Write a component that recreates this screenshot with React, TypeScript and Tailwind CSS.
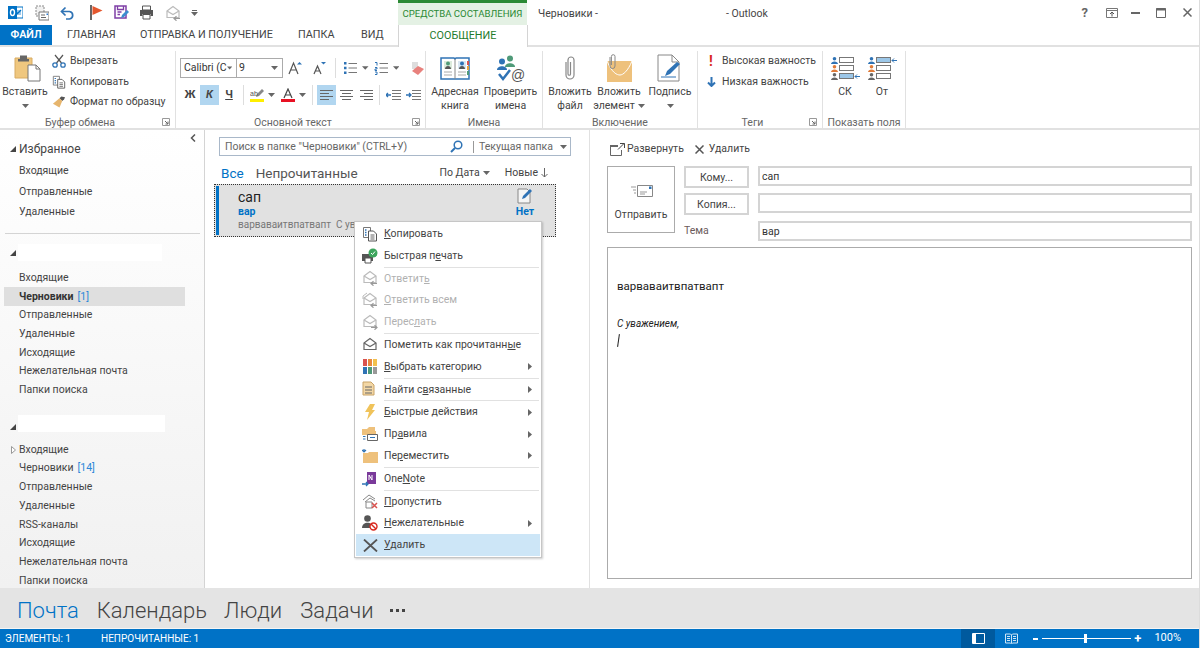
import type { ReactNode } from "react";

const Caret = ({ className = "" }: { className?: string }) => (
  <svg width="7" height="4" viewBox="0 0 7 4" className={className}>
    <path d="M0 0h7L3.500 4z" fill="#666" />
  </svg>
);

const Launcher = () => (
  <svg width="8" height="8" viewBox="0 0 8 8" className="absolute right-[5px] top-[67px]">
    <path d="M.5 7.500V.5h7v7z" fill="none" stroke="#999" />
    <path d="M3 3l3 3M6 3.500V6H3.500" fill="none" stroke="#666" />
  </svg>
);

const Corner = ({ size = 8, className = "" }: { size?: number; className?: string }) => (
  <svg width={size} height={size} viewBox="0 0 8 8" className={className}>
    <path d="M8 0v8H0z" fill="#444" />
  </svg>
);

const Group = ({ width, label, launcher, children }: { width: string; label: string; launcher?: boolean; children: ReactNode }) => (
  <div className={`relative flex shrink-0 flex-col border-r border-[#e1e1e1] ${width}`}>
    <div className="h-[65px] shrink-0">{children}</div>
    <div className={`text-center text-[10.500px] leading-[14px] text-[#666] ${launcher ? "pr-[15px]" : ""}`}>{label}</div>
    {launcher && <Launcher />}
  </div>
);

const BigButton = ({ icon, lines, caret, width }: { icon: ReactNode; lines: string[]; caret?: boolean; width: string }) => (
  <div className={`flex shrink-0 flex-col items-center ${width}`}>
    <div className="flex h-[34px] items-center justify-center">{icon}</div>
    {lines.map((line, i) => (
      <div key={line} className="flex h-[14px] items-center gap-[3px] whitespace-nowrap text-[10.500px] text-[#444]">
        {line}
        {caret && i === lines.length - 1 && lines.length > 1 && <Caret />}
      </div>
    ))}
    {caret && lines.length === 1 && <Caret className="mt-[5px]" />}
  </div>
);

const OutlookLogo = () => (
  <svg width="15" height="15" viewBox="0 0 15 15">
    <rect x="5" y="2" width="10" height="11" fill="#fff" stroke="#0072c6" />
    <path d="M7 5h6v5H7z" fill="#9cc7e8" />
    <path d="M8 7l1.500 1.500L13 5" fill="none" stroke="#0072c6" strokeWidth="1.300" />
    <rect y="1" width="9" height="13" fill="#0072c6" />
    <ellipse cx="4.500" cy="7.500" rx="2" ry="3" fill="none" stroke="#fff" strokeWidth="1.400" />
  </svg>
);

const ForwardMail = () => (
  <svg width="15" height="16" viewBox="0 0 15 16">
    <path d="M2 1h8v10H2z" fill="#f1f1f1" stroke="#8a8a8a" strokeDasharray="2 1" />
    <path d="M5 7h10v8H5z" fill="#fff" stroke="#777" />
    <path d="M7 10h4M7 12.500h5" stroke="#666" />
    <path d="M12.500 8.500h1.500v1.500h-1.500z" fill="#2b7cd3" />
  </svg>
);

const Undo = () => (
  <svg width="15" height="14" viewBox="0 0 15 14">
    <path d="M2 5.500h7.500a3.800 3.800 0 0 1 0 7.500H6" fill="none" stroke="#2f73b5" strokeWidth="1.700" />
    <path d="M5.500 1.500L1.500 5.500l4 4" fill="none" stroke="#2f73b5" strokeWidth="1.700" />
  </svg>
);

const Flag = () => (
  <svg width="13" height="15" viewBox="0 0 13 15">
    <path d="M1 0v15" stroke="#666" strokeWidth="2" />
    <path d="M2.500 1l10 4.500-10 4.500z" fill="#e4572e" />
  </svg>
);

const SaveEdit = () => (
  <svg width="15" height="15" viewBox="0 0 15 15">
    <path d="M1 1h11v12H1z" fill="#fff" stroke="#7f3fa6" strokeWidth="1.500" />
    <path d="M3.500 1v3.500h6V1M3.500 7h4M3.500 9.500h2.500" stroke="#7f3fa6" strokeWidth="1.300" fill="none" />
    <path d="M7 13l1-3 5-5 2 2-5 5z" fill="#3b8ed0" />
  </svg>
);

const Printer = () => (
  <svg width="15" height="15" viewBox="0 0 15 15">
    <path d="M3.500 1h8v4h-8z" fill="#fff" stroke="#555" />
    <path d="M1 5h13v6h-2.500V9h-8v2H1z" fill="#555" />
    <path d="M4 9.500h7v4.500H4z" fill="#fff" stroke="#555" />
  </svg>
);

const OpenMail = ({ color = "#bbb", arrow, all }: { color?: string; arrow?: "left" | "right"; all?: boolean }) => (
  <svg width="16" height="16" viewBox="0 0 16 16">
    {all && <path d="M1 7V4l4-3" fill="none" stroke={color} />}
    <path d="M2 6l6-4.500L14 6v6.500H2z" fill="#fff" stroke={color} strokeWidth="1.200" />
    <path d="M2 6l6 3.500L14 6" fill="none" stroke={color} strokeWidth="1.200" />
    {arrow === "left" && <path d="M15 13.500H9m2.500-2.200L9 13.500l2.500 2.200" fill="none" stroke="#999" strokeWidth="1.200" />}
    {arrow === "right" && <path d="M9 13.500h6m-2.500-2.200l2.500 2.200-2.500 2.200" fill="none" stroke="#999" strokeWidth="1.200" />}
  </svg>
);

const CopyIcon = () => (
  <svg width="16" height="16" viewBox="0 0 16 16">
    <path d="M1.500 1.500h7v10h-7z" fill="#fff" stroke="#777" />
    <path d="M3 4h1.500M3 6.500h1.500M3 9h1.500" stroke="#2f73b5" strokeWidth="1.300" />
    <path d="M6.500 5h5l3 3v7h-8z" fill="#fff" stroke="#555" />
    <path d="M8.500 9h4M8.500 11h4M8.500 13h4" stroke="#666" />
  </svg>
);

const Scissors = () => (
  <svg width="14" height="14" viewBox="0 0 14 14">
    <path d="M3 1l6.500 8M11 1L4.500 9" stroke="#555" strokeWidth="1.200" />
    <circle cx="3" cy="11" r="2.200" fill="none" stroke="#2f73b5" strokeWidth="1.300" />
    <circle cx="11" cy="11" r="2.200" fill="none" stroke="#2f73b5" strokeWidth="1.300" />
  </svg>
);

const Brush = () => (
  <svg width="15" height="14" viewBox="0 0 15 14">
    <path d="M8 3l2-2 4 1-1 2-2 2z" fill="#555" />
    <path d="M8 3l3 3-3 7-7-4z" fill="#e6b56d" />
  </svg>
);

const PasteIcon = () => (
  <svg width="27" height="28" viewBox="0 0 27 28" className="ml-[4px]">
    <path d="M1 4h17v20H1z" fill="#efc77f" stroke="#d8ab62" />
    <path d="M6 1.500h7V5h2v2.500H4V5h2z" fill="#666" />
    <path d="M14 11h8l4 4v12H14z" fill="#fff" stroke="#777" />
    <path d="M22 11v4h4" fill="none" stroke="#777" />
  </svg>
);

const FontA = ({ up }: { up?: boolean }) => (
  <svg width="14" height="14" viewBox="0 0 14 14">
    <path d={up ? "M1 13L5.500 2 10 13M3 9h5" : "M2 13L5.500 5 9 13M3.500 10h4"} fill="none" stroke="#555" strokeWidth="1.200" />
    <path d={up ? "M9 3.500h5L11.500 1z" : "M9 1h5l-2.500 2.500z"} fill="#2f73b5" />
  </svg>
);

const ListIcon = ({ numbered }: { numbered?: boolean }) => (
  <svg width="14" height="14" viewBox="0 0 14 14">
    {numbered ? (
      <path d="M1 1.500h2v3M1 6.500h2v1.500H1v1.500h2M1 11h2v2.500H1" fill="none" stroke="#2f73b5" />
    ) : (
      <path d="M1 1h2.500v2.500H1zM1 5.750h2.500v2.500H1zM1 10.500h2.500V13H1z" fill="#2f73b5" />
    )}
    <path d="M5.500 2.500H14M5.500 7H14M5.500 11.500H14" stroke="#777" />
  </svg>
);

const Align = ({ mode }: { mode: "left" | "center" | "right" }) => {
  const d = {
    left: "M0 1.500h13M0 4.500h9M0 7.500h13M0 10.500h9",
    center: "M0 1.500h13M2 4.500h9M0 7.500h13M2 10.500h9",
    right: "M0 1.500h13M4 4.500h9M0 7.500h13M4 10.500h9",
  }[mode];
  return (
    <svg width="13" height="12" viewBox="0 0 13 12">
      <path d={d} stroke="#666" />
    </svg>
  );
};

const Indent = ({ reverse }: { reverse?: boolean }) => (
  <svg width="15" height="12" viewBox="0 0 15 12">
    <path d="M6 1.500h9M6 4.500h9M6 7.500h9M6 10.500h9" stroke="#777" />
    <path d={reverse ? "M0 6h5M3 4l2 2-2 2" : "M5 6H0M2 4L0 6l2 2"} fill="none" stroke="#2f73b5" strokeWidth="1.300" />
  </svg>
);

const Eraser = () => (
  <svg width="14" height="15" viewBox="0 0 14 15">
    <path d="M1 1h6v7H1z" fill="#ddd" />
    <path d="M1 10l6-5 6 3-6 6z" fill="#e8817d" />
  </svg>
);

const AddressBook = () => (
  <svg width="30" height="25" viewBox="0 0 30 25">
    <path d="M1 2h13l1 1 1-1h13v21H1z" fill="#fff" stroke="#2f73b5" strokeWidth="1.500" />
    <path d="M15 3v20" stroke="#888" />
    <rect x="4" y="5" width="8" height="8" fill="#dcebdc" />
    <rect x="18" y="5" width="8" height="8" fill="#d8e6f3" />
    <circle cx="8" cy="7.500" r="2" fill="#4f9a78" />
    <circle cx="22" cy="7.500" r="2" fill="#2f73b5" />
    <path d="M5 13c0-4 6-4 6 0zM19 13c0-4 6-4 6 0z" fill="#555" />
    <path d="M4 16h8M4 19h8M18 16h8M18 19h8" stroke="#aaa" />
    <path d="M28 5v4" stroke="#d9534f" strokeWidth="2" />
    <path d="M28 10v4" stroke="#e8a33d" strokeWidth="2" />
    <path d="M28 15v4" stroke="#4f9a78" strokeWidth="2" />
  </svg>
);

const CheckNames = () => (
  <svg width="28" height="27" viewBox="0 0 28 27">
    <circle cx="13" cy="3.500" r="3" fill="#4f9a78" />
    <path d="M8 12c0-5 10-5 10 0z" fill="#4f9a78" />
    <circle cx="5" cy="6.500" r="3" fill="#2f73b5" />
    <path d="M0 15c0-5 10-5 10 0z" fill="#2f73b5" />
    <path d="M2 19l4 5 7-9" fill="none" stroke="#2f73b5" strokeWidth="2.500" />
    <text x="14" y="25" fontSize="14" fill="#555" fontFamily="Liberation Sans">@</text>
  </svg>
);

const Clip = () => (
  <svg width="14" height="26" viewBox="0 0 14 26">
    <path d="M3 7v13a4 4 0 0 0 8 0V5a3 3 0 0 0-6 0v14a1.200 1.200 0 0 0 2.500 0V7" fill="none" stroke="#888" strokeWidth="1.200" />
  </svg>
);

const AttachItem = () => (
  <svg width="26" height="29" viewBox="0 0 26 29">
    <path d="M1 7h25v21H1z" fill="#eec17c" />
    <path d="M1 7c5 12 10 14 13 14s8-4 12-14" fill="none" stroke="#fff" />
    <path d="M4 3v9a2.500 2.500 0 0 0 5 0V2.500a1.800 1.800 0 0 0-3.600 0V11" fill="none" stroke="#888" />
  </svg>
);

const Signature = () => (
  <svg width="26" height="28" viewBox="0 0 26 28">
    <path d="M1 1h14l7 7v19H1z" fill="#fff" stroke="#888" />
    <path d="M15 1v7h7" fill="none" stroke="#888" />
    <path d="M4 23h15" stroke="#2f73b5" />
    <path d="M8 22l2-5L20 8l3 2-10 10z" fill="#2f73b5" />
  </svg>
);

const Contact = ({ color }: { color: string }) => (
  <svg width="7" height="7" viewBox="0 0 7 7">
    <circle cx="3.500" cy="1.800" r="1.800" fill={color} />
    <path d="M0 7c0-3.500 7-3.500 7 0z" fill={color} />
  </svg>
);

const FieldRow = ({ color, on, arrow }: { color: string; on?: boolean; arrow?: boolean }) => (
  <div className="flex h-[7px] items-center gap-[1px]">
    <Contact color={color} />
    <div className={`h-[6px] w-[15px] border border-[#777] ${on ? "bg-[#9cc7e8]" : "bg-white"}`} />
    {arrow ? (
      <svg width="6" height="5" viewBox="0 0 6 5" className="ml-[-1px]">
        <path d="M6 2.500H1M3 .5l-2 2 2 2" fill="none" stroke="#2f73b5" />
      </svg>
    ) : (
      <span className="w-[5px]" />
    )}
  </div>
);

const FieldsIcon = ({ active }: { active: number }) => (
  <div className="flex flex-col gap-[1px]">
    {["#2f73b5", "#e07b39", "#666"].map((color, i) => (
      <FieldRow key={color} color={color} on={i === active} arrow={i === active} />
    ))}
  </div>
);

const SmallRibbonRow = ({ icon, text }: { icon: ReactNode; text: string }) => (
  <div className="flex h-[20.500px] items-center gap-[4px] whitespace-nowrap text-[10.500px] text-[#444]">
    <span className="flex w-[14px] justify-center">{icon}</span>
    {text}
  </div>
);

const VLine = ({ className = "" }: { className?: string }) => <span className={`h-[20px] w-px bg-[#ddd] ${className}`} />;

const Ribbon = () => (
  <div className="flex h-[83px] shrink-0 border-b-2 border-[#e1e1e1] pt-[4px]">
    <Group width="w-[176px]" label="Буфер обмена" launcher>
      <div className="flex">
        <div className="w-[50px]">
          <BigButton width="w-[50px]" icon={<PasteIcon />} lines={["Вставить"]} caret />
        </div>
        <div className="ml-[2px]">
          <SmallRibbonRow icon={<Scissors />} text="Вырезать" />
          <SmallRibbonRow icon={<CopyIcon />} text="Копировать" />
          <SmallRibbonRow icon={<Brush />} text="Формат по образцу" />
        </div>
      </div>
    </Group>
    <Group width="w-[250px]" label="Основной текст" launcher>
      <div className="flex items-center pl-[4px] pt-[7px]">
        <div className="flex h-[20px] w-[57px] items-center justify-between whitespace-nowrap border border-[#ababab] pl-[3px] pr-[4px] text-[10.500px] text-[#333]">
          Calibri (С <Caret />
        </div>
        <div className="ml-[-1px] flex h-[20px] w-[50px] items-center justify-between border border-[#ababab] pl-[2px] pr-[4px] text-[10.500px] text-[#333]">
          9 <Caret />
        </div>
        <span className="ml-[5px] flex"><FontA up /></span>
        <span className="ml-[10px] flex"><FontA /></span>
        <VLine className="ml-[9px]" />
        <span className="ml-[7px] flex"><ListIcon /></span>
        <Caret className="ml-[5px]" />
        <span className="ml-[5px] flex"><ListIcon numbered /></span>
        <Caret className="ml-[5px]" />
        <span className="ml-[12px] flex"><Eraser /></span>
      </div>
      <div className="mt-[7px] flex h-[20px] items-center pl-[4px]">
        <span className="w-[20px] text-center text-[11px] font-bold text-[#444]">Ж</span>
        <span className="w-[19px] bg-[#b1d6f0] text-center text-[11px] font-bold italic leading-[20px] text-[#444]">К</span>
        <span className="w-[20px] text-center text-[11px] font-bold text-[#444] underline">Ч</span>
        <VLine className="ml-[4px]" />
        <svg width="14" height="14" viewBox="0 0 14 14" className="ml-[6px]">
          <path d="M0 11h14v3H0z" fill="#ffef00" />
          <path d="M6 9l1-3 5-5 2 2-5 5z" fill="#888" />
          <text x="0" y="8" fontSize="7" fill="#555" fontFamily="Liberation Sans">ab</text>
        </svg>
        <Caret className="ml-[4px]" />
        <svg width="14" height="14" viewBox="0 0 14 14" className="ml-[6px]">
          <path d="M0 11h14v3H0z" fill="#e81123" />
          <path d="M3 10L7 1l4 9M4.500 7h5" fill="none" stroke="#444" strokeWidth="1.200" />
        </svg>
        <Caret className="ml-[4px]" />
        <VLine className="ml-[6px]" />
        <span className="ml-[4px] flex h-[20px] w-[19px] items-center justify-center bg-[#b1d6f0]"><Align mode="left" /></span>
        <span className="flex h-[20px] w-[20px] items-center justify-center"><Align mode="center" /></span>
        <span className="flex h-[20px] w-[20px] items-center justify-center"><Align mode="right" /></span>
        <VLine className="ml-[3px]" />
        <span className="ml-[6px] flex"><Indent /></span>
        <span className="ml-[5px] flex"><Indent reverse /></span>
      </div>
    </Group>
    <Group width="w-[117px]" label="Имена">
      <div className="flex pl-[1px]">
        <BigButton width="w-[56px]" icon={<AddressBook />} lines={["Адресная", "книга"]} />
        <BigButton width="w-[55px]" icon={<CheckNames />} lines={["Проверить", "имена"]} />
      </div>
    </Group>
    <Group width="w-[155px]" label="Включение">
      <div className="flex pl-[3px]">
        <BigButton width="w-[48px]" icon={<Clip />} lines={["Вложить", "файл"]} />
        <BigButton width="w-[50px]" icon={<AttachItem />} lines={["Вложить", "элемент"]} caret />
        <BigButton width="w-[52px]" icon={<Signature />} lines={["Подпись"]} caret />
      </div>
    </Group>
    <Group width="w-[125px]" label="Теги" launcher>
      <div className="pl-[6px]">
        <SmallRibbonRow icon={<span className="text-[14px] font-bold leading-none text-[#d9281e]">!</span>} text="Высокая важность" />
        <SmallRibbonRow
          icon={
            <svg width="9" height="10" viewBox="0 0 9 10">
              <path d="M4.500 0v9M1 5.500L4.500 9 8 5.500" fill="none" stroke="#2f73b5" strokeWidth="2" />
            </svg>
          }
          text="Низкая важность"
        />
      </div>
    </Group>
    <Group width="w-[83px]" label="Показать поля">
      <div className="flex pl-[3px]">
        <BigButton width="w-[38px]" icon={<FieldsIcon active={2} />} lines={["СК"]} />
        <BigButton width="w-[36px]" icon={<FieldsIcon active={0} />} lines={["От"]} />
      </div>
    </Group>
  </div>
);

const TitleBar = () => (
  <div className="flex h-[25px] shrink-0">
    <div className="flex w-[398px] items-center pl-[8px]">
      <span className="flex"><OutlookLogo /></span>
      <span className="ml-[11px] flex"><ForwardMail /></span>
      <span className="ml-[11px] flex"><Undo /></span>
      <span className="ml-[15px] flex"><Flag /></span>
      <span className="ml-[11px] flex"><SaveEdit /></span>
      <span className="ml-[10px] flex"><Printer /></span>
      <span className="ml-[11px] flex"><OpenMail arrow="left" /></span>
      <span className="ml-[10px] flex flex-col items-center gap-[1px]">
        <span className="h-px w-[5px] bg-[#666]" />
        <Caret />
      </span>
    </div>
    <div className="flex w-[129px] items-center justify-center whitespace-nowrap border-t-[3px] border-[#2b8a35] bg-[#e4f1e4] text-[9.600px] text-[#2b8a35]">
      СРЕДСТВА СОСТАВЛЕНИЯ
    </div>
    <div className="flex flex-1 items-center whitespace-pre pl-[11px] pt-[2px] text-[10.500px] text-[#444]">
      <span className="w-[188px]">Черновики -</span>
      <span>- Outlook</span>
    </div>
    <div className="flex items-center pr-[7px]">
      <span className="mr-[18px] text-[13px] font-bold text-[#666]">?</span>
      <svg width="12" height="10" viewBox="0 0 12 10" className="mr-[13px]">
        <path d="M.5.5h11v9H.5zM.5 2.500h11" fill="none" stroke="#777" />
        <path d="M6 8.500V4M4 6l2-2 2 2" fill="none" stroke="#555" />
      </svg>
      <span className="mr-[16px] h-[2px] w-[9px] bg-[#666]" />
      <svg width="10" height="10" viewBox="0 0 10 10" className="mr-[17px]">
        <path d="M.5.5h9v9h-9z" fill="none" stroke="#666" />
        <path d="M0 1.500h10" stroke="#666" strokeWidth="2" />
      </svg>
      <svg width="9" height="9" viewBox="0 0 9 9">
        <path d="M.5.5l8 8M8.500.5l-8 8" stroke="#666" strokeWidth="1.500" />
      </svg>
    </div>
  </div>
);

const TabBar = () => (
  <div className="flex h-[22px] shrink-0 items-stretch border-b-2 border-[#e1e1e1] text-[10.800px] text-[#444]">
    <div className="flex w-[52px] items-center justify-center bg-[#0072c6] pt-[1px] font-semibold text-white">ФАЙЛ</div>
    <div className="flex w-[346px] items-center pl-[15px] pt-[1px]">
      <span className="w-[73px]">ГЛАВНАЯ</span>
      <span className="w-[158px]">ОТПРАВКА И ПОЛУЧЕНИЕ</span>
      <span className="w-[63px]">ПАПКА</span>
      <span>ВИД</span>
    </div>
    <div className="mb-[-2px] flex w-[130px] items-center justify-center border-x border-[#d4d4d4] bg-white text-[#1e7b2c]">СООБЩЕНИЕ</div>
  </div>
);

const FolderRow = ({ name, count, active, bold, arrow, height = "h-[18.700px]" }: { name: string; count?: number; active?: boolean; bold?: boolean; arrow?: boolean; height?: string }) => (
  <div className={`relative ml-[4px] mr-[19px] flex items-center whitespace-nowrap pl-[15px] text-[10.500px] text-[#444] ${height} ${active ? "bg-[#dfdfdf]" : ""}`}>
    {arrow && (
      <svg width="5" height="8" viewBox="0 0 5 8" className="absolute left-[7px]">
        <path d="M.5.5l4 3.500-4 3.500z" fill="#fff" stroke="#999" />
      </svg>
    )}
    <span className={bold ? "font-bold text-[#333]" : ""}>{name}</span>
    {count !== undefined && <span className="ml-[4px] text-[#2b88d8]">[{count}]</span>}
  </div>
);

const Sidebar = () => (
  <div className="relative w-[205px] shrink-0 overflow-hidden border-r border-[#d4d4d4] bg-gradient-to-b from-white to-[#f1f1f1]">
    <svg width="6" height="8" viewBox="0 0 6 8" className="absolute right-[8px] top-[4px]">
      <path d="M5 .5L1.500 4 5 7.500" fill="none" stroke="#555" strokeWidth="1.500" />
    </svg>
    <div className="mt-[10px] flex h-[18px] items-center pl-[10px] text-[12px] text-[#444]">
      <Corner size={6} />
      <span className="ml-[3px]">Избранное</span>
    </div>
    <div className="mt-[3px]">
      <FolderRow name="Входящие" height="h-[20.500px]" />
      <FolderRow name="Отправленные" height="h-[20.500px]" />
      <FolderRow name="Удаленные" height="h-[20.500px]" />
    </div>
    <div className="ml-[5px] mr-[4px] mt-[10px] h-px bg-[#d4d4d4]" />
    <div className="mt-[10px] flex h-[18px] items-center pl-[10px]">
      <Corner size={6} />
      <span className="ml-[2px] h-[17px] w-[144px] bg-white" />
    </div>
    <div className="mt-[7px]">
      <FolderRow name="Входящие" />
      <FolderRow name="Черновики" count={1} active bold />
      <FolderRow name="Отправленные" />
      <FolderRow name="Удаленные" />
      <FolderRow name="Исходящие" />
      <FolderRow name="Нежелательная почта" />
      <FolderRow name="Папки поиска" />
    </div>
    <div className="mt-[16px] flex h-[18px] items-start pl-[10px]">
      <Corner size={6} className="mt-[9px]" />
      <span className="ml-[2px] h-[17px] w-[147px] bg-white" />
    </div>
    <div className="mt-[7px]">
      <FolderRow name="Входящие" arrow />
      <FolderRow name="Черновики" count={14} />
      <FolderRow name="Отправленные" />
      <FolderRow name="Удаленные" />
      <FolderRow name="RSS-каналы" />
      <FolderRow name="Исходящие" />
      <FolderRow name="Нежелательная почта" />
      <FolderRow name="Папки поиска" />
    </div>
  </div>
);

const MessageList = () => (
  <div className="flex w-[385px] shrink-0 flex-col border-r border-[#e1e1e1] pl-[14px] pt-[7px]">
    <div className="flex h-[19px] w-[352px] items-center border border-[#a9b8c9] pl-[5px] pr-[3px] text-[10.500px] text-[#666]">
      <span className="flex-1 whitespace-nowrap pt-px">Поиск в папке "Черновики" (CTRL+У)</span>
      <svg width="13" height="13" viewBox="0 0 13 13">
        <circle cx="8" cy="5" r="3.800" fill="none" stroke="#2f73b5" strokeWidth="1.500" />
        <path d="M5 8l-4 4" stroke="#2f73b5" strokeWidth="2" />
      </svg>
      <span className="ml-[10px] mr-[5px] h-[12px] w-px bg-[#999]" />
      <span className="whitespace-nowrap pt-px">Текущая папка</span>
      <Caret className="ml-[7px]" />
    </div>
    <div className="mt-[7px] flex h-[20px] w-[329px] items-center pl-[2px]">
      <span className="text-[13.500px] text-[#0072c6]">Все</span>
      <span className="ml-[12px] text-[13.500px] text-[#555]">Непрочитанные</span>
      <span className="ml-auto text-[10.500px] text-[#444]">По Дата</span>
      <Caret className="ml-[3px]" />
      <span className="ml-[15px] text-[10.500px] text-[#444]">Новые</span>
      <svg width="7" height="10" viewBox="0 0 7 10" className="ml-[3px]">
        <path d="M3.500 0v9M.5 6l3 3 3-3" fill="none" stroke="#666" />
      </svg>
    </div>
    <div className="ml-[-5px] mt-[1px] flex h-[53px] w-[342px] border border-dotted border-[#333] bg-[#e1e1e1] pl-px">
      <div className="my-px w-[3px] bg-[#0072c6]" />
      <div className="min-w-0 flex-1 pl-[19px]">
        <div className="pt-[4px] text-[14px] leading-[16px] text-[#222]">сап</div>
        <div className="text-[10.500px] font-bold leading-[13px] text-[#0072c6]">вар</div>
        <div className="whitespace-nowrap text-[10px] leading-[14px] text-[#777]">варваваитвпатвапт&nbsp;&nbsp;С уважением,</div>
      </div>
      <div className="flex w-[60px] shrink-0 flex-col items-center pt-[3px]">
        <svg width="16" height="16" viewBox="0 0 16 16">
          <path d="M1 1h9l3 3v11H1z" fill="#f5f5f5" stroke="#888" />
          <path d="M5 11l1-3 7-7 2 2-7 7z" fill="#2f73b5" />
        </svg>
        <div className="mt-px text-[10.500px] font-bold leading-[14px] text-[#0072c6]">Нет</div>
      </div>
    </div>
  </div>
);

const FieldButton = ({ text }: { text: string }) => (
  <div className="flex h-[22px] w-[65px] items-center justify-center border-2 border-[#d4d4d4] pt-[2px] text-[10.500px] text-[#444]">{text}</div>
);

const FieldInput = ({ value }: { value?: string }) => (
  <div className="flex h-[20px] flex-1 items-center border-2 border-[#d4d4d4] pl-[2px] pt-px text-[10.500px] text-[#333]">{value}</div>
);

const ReadingPane = () => (
  <div className="flex min-w-0 flex-1 flex-col pl-[17px] pr-[7px]">
    <div className="flex h-[36px] items-center pt-[2px] text-[10.500px] text-[#444]">
      <svg width="15" height="13" viewBox="0 0 15 13" className="ml-[3px] mr-[2px]">
        <path d="M8 2.500H.5v10h11V7" fill="none" stroke="#666" />
        <path d="M0 2h8v2H0z" fill="#666" />
        <path d="M8 6.500l6-6M10 .5h4.500V5" fill="none" stroke="#444" />
      </svg>
      Развернуть
      <svg width="9" height="9" viewBox="0 0 9 9" className="ml-[11px] mr-[5px]">
        <path d="M.5.5l8 8M8.500.5l-8 8" stroke="#555" strokeWidth="1.500" />
      </svg>
      Удалить
    </div>
    <div className="flex">
      <div className="flex h-[67px] w-[68px] shrink-0 flex-col items-center border border-[#ababab] pt-[18px] text-[10.500px] text-[#444]">
        <svg width="24" height="12" viewBox="0 0 24 12">
          <path d="M8.500.5h15v11h-15z" fill="#fff" stroke="#888" />
          <path d="M11 7h7M11 9h5M2 2h5M4 5h3M5 8h2" stroke="#999" />
          <path d="M20 1.500h2.500v2.500H20z" fill="#2f73b5" />
        </svg>
        <div className="mt-[10px]">Отправить</div>
      </div>
      <div className="ml-[9px] flex flex-1 flex-col">
        <div className="flex gap-[9px]">
          <FieldButton text="Кому..." />
          <FieldInput value="сап" />
        </div>
        <div className="mt-[5px] flex gap-[9px]">
          <FieldButton text="Копия..." />
          <FieldInput />
        </div>
        <div className="mt-[6px] flex gap-[9px]">
          <div className="w-[65px] text-[10.500px] leading-[20px] text-[#6b5a5a]">Тема</div>
          <FieldInput value="вар" />
        </div>
      </div>
    </div>
    <div className="mb-[9px] mt-[6px] flex-1 border border-[#ababab] pl-[9px] pt-[30px]">
      <div className="text-[11.500px] leading-[16px] text-[#222]">варваваитвпатвапт</div>
      <div className="mt-[24px] text-[10px] italic leading-[12px] text-[#222]">С уважением,</div>
      <div className="ml-px mt-[4px] h-[13px] w-px rotate-[8deg] bg-[#222]" />
    </div>
  </div>
);

type MenuItem = { icon?: ReactNode; parts: [string, string, string]; disabled?: boolean; sub?: boolean; active?: boolean } | "sep";

const Tile = ({ colors }: { colors: string[] }) => (
  <div className="grid grid-cols-3 gap-px">
    {colors.map((c, i) => (
      <span key={i} className="h-[7px] w-[4px]" style={{ backgroundColor: c }} />
    ))}
  </div>
);

const menu: MenuItem[] = [
  { icon: <CopyIcon />, parts: ["", "К", "опировать"] },
  {
    icon: (
      <svg width="16" height="16" viewBox="0 0 16 16">
        <path d="M0 6h11v7H0z" fill="#555" />
        <path d="M3 10h6v5H3z" fill="#fff" stroke="#555" />
        <circle cx="11" cy="5" r="4.500" fill="#3ca55c" />
        <path d="M9 5l1.500 1.500L13 3.500" fill="none" stroke="#fff" />
      </svg>
    ),
    parts: ["Быстрая п", "е", "чать"],
  },
  "sep",
  { icon: <OpenMail arrow="left" />, parts: ["Ответит", "ь", ""], disabled: true },
  { icon: <OpenMail arrow="left" all />, parts: ["", "О", "тветить всем"], disabled: true },
  { icon: <OpenMail arrow="right" />, parts: ["Перес", "л", "ать"], disabled: true },
  "sep",
  { icon: <OpenMail color="#666" />, parts: ["Пометить как прочитанн", "ы", "е"] },
  {
    icon: <Tile colors={["#d9534f", "#e8873d", "#f2c14e", "#2f73b5", "#4f9a78", "#999"]} />,
    parts: ["", "В", "ыбрать категорию"],
    sub: true,
  },
  "sep",
  {
    icon: (
      <svg width="16" height="16" viewBox="0 0 16 16">
        <path d="M1 1h8l3 3v10H1z" fill="#f3d7a5" stroke="#c9a366" />
        <path d="M3 6h7M3 9h7M3 12h7" stroke="#666" />
      </svg>
    ),
    parts: ["Найти с", "в", "язанные"],
    sub: true,
  },
  "sep",
  {
    icon: (
      <svg width="10" height="16" viewBox="0 0 10 16">
        <path d="M5 0h5L7 6h3L2 16l2-8H0z" fill="#f0c35a" />
      </svg>
    ),
    parts: ["", "Б", "ыстрые действия"],
    sub: true,
  },
  {
    icon: (
      <svg width="16" height="14" viewBox="0 0 16 14">
        <path d="M0 2h5l2-2h6v6H0z" fill="#eec17c" />
        <path d="M0 4h14v4H0z" fill="#eec17c" />
        <path d="M5.500 7.500h10v6h-10z" fill="#fff" stroke="#666" />
        <path d="M8 10.500h5M1 9.500h2.500M1 12h2.500" stroke="#2f73b5" />
      </svg>
    ),
    parts: ["Пр", "а", "вила"],
    sub: true,
  },
  {
    icon: (
      <svg width="16" height="14" viewBox="0 0 16 14">
        <path d="M1 4h5l1-1h9v11H1z" fill="#eec17c" />
        <path d="M0 1l2 2 2-2M2 0v3" fill="none" stroke="#2f73b5" strokeWidth="1.200" />
      </svg>
    ),
    parts: ["Пе", "р", "еместить"],
    sub: true,
  },
  "sep",
  {
    icon: (
      <svg width="16" height="16" viewBox="0 0 16 16">
        <path d="M5 1h9v12H5z" fill="#7a3a9a" />
        <path d="M7 9V4l3 5V4" fill="none" stroke="#fff" />
        <path d="M0 13h6m-2-2l2 2-2 2" fill="none" stroke="#2f73b5" strokeWidth="1.300" />
      </svg>
    ),
    parts: ["One", "N", "ote"],
  },
  "sep",
  {
    icon: (
      <svg width="16" height="16" viewBox="0 0 16 16">
        <path d="M1 7l6-5 6 4M3 9l5-4 5 3" fill="none" stroke="#888" />
        <path d="M4 9h6v6H4z" fill="#fff" stroke="#888" />
        <path d="M10 10l5 5M15 10l-5 5" stroke="#d9534f" strokeWidth="1.500" />
      </svg>
    ),
    parts: ["", "П", "ропустить"],
  },
  {
    icon: (
      <svg width="16" height="16" viewBox="0 0 16 16">
        <circle cx="5.500" cy="3.500" r="3.300" fill="#555" />
        <path d="M0 13c0-7 11-7 11 0z" fill="#555" />
        <circle cx="11.500" cy="11.500" r="3.500" fill="#fff" stroke="#d9281e" strokeWidth="1.400" />
        <path d="M9 9l5 5" stroke="#d9281e" strokeWidth="1.400" />
      </svg>
    ),
    parts: ["", "Н", "ежелательные"],
    sub: true,
  },
  {
    icon: (
      <svg width="15" height="13" viewBox="0 0 15 13">
        <path d="M1 .5l13 12M14 .5L1 12.500" stroke="#555" strokeWidth="1.800" />
      </svg>
    ),
    parts: ["", "У", "далить"],
    active: true,
  },
];

const ContextMenu = () => (
  <div className="absolute left-[354px] top-[221px] w-[188px] border border-[#c6c6c6] bg-white p-px shadow-[1px_1px_2px_rgba(0,0,0,0.2)]">
    {menu.map((item, i) =>
      item === "sep" ? (
        <div key={i} className="ml-[28px] mr-px h-px bg-[#e1e1e1]" />
      ) : (
        <div
          key={i}
          className={`flex h-[21.800px] items-center whitespace-nowrap pr-[8px] text-[10.500px] ${item.disabled ? "text-[#b1b1b1]" : "text-[#444]"} ${item.active ? "bg-[#cde6f7]" : ""}`}
        >
          <span className="flex w-[28px] shrink-0 justify-center">{item.icon}</span>
          <span>
            {item.parts[0]}
            <u>{item.parts[1]}</u>
            {item.parts[2]}
          </span>
          {item.sub && (
            <svg width="4" height="7" viewBox="0 0 4 7" className="ml-auto">
              <path d="M0 0l4 3.500L0 7z" fill="#666" />
            </svg>
          )}
        </div>
      ),
    )}
  </div>
);

const NavBar = () => (
  <div className="flex h-[41px] shrink-0 items-center border-b border-[#f5f5f5] bg-[#e4e4e4] pl-[17px] pt-[4px] text-[22px] font-light text-[#444]">
    <span className="text-[#0072c6]">Почта</span>
    <span className="ml-[18px]">Календарь</span>
    <span className="ml-[17px]">Люди</span>
    <span className="ml-[18px]">Задачи</span>
    <span className="ml-[16px] flex gap-[3px]">
      <i className="h-[3px] w-[3px] bg-[#444]" />
      <i className="h-[3px] w-[3px] bg-[#444]" />
      <i className="h-[3px] w-[3px] bg-[#444]" />
    </span>
  </div>
);

const StatusBar = () => (
  <div className="flex h-[19px] shrink-0 items-center bg-[#0072c6] text-[10px] text-white">
    <span className="ml-[5px] w-[96px]">ЭЛЕМЕНТЫ: 1</span>
    <span>НЕПРОЧИТАННЫЕ: 1</span>
    <div className="ml-auto flex h-full items-center">
      <span className="flex h-full w-[34px] items-center justify-center bg-[#005a9e]">
        <svg width="13" height="11" viewBox="0 0 13 11">
          <path d="M.5.5h12v10H.5z" fill="none" stroke="#fff" />
          <path d="M1 1h3v9H1z" fill="#fff" />
        </svg>
      </span>
      <svg width="13" height="11" viewBox="0 0 13 11" className="ml-[10px]">
        <path d="M.5 1h5l1 1 1-1h5v9h-5l-1 1-1-1h-5zM6.500 2v8M2 3.500h3M2 5.500h3M2 7.500h3M8 3.500h3M8 5.500h3M8 7.500h3" fill="none" stroke="#cfe5f5" />
      </svg>
      <span className="ml-[15px] h-[2px] w-[5px] bg-white" />
      <span className="relative ml-[4px] flex h-px w-[89px] items-center bg-white">
        <i className="absolute left-[42px] h-[9px] w-[3px] bg-white" />
      </span>
      <span className="ml-[3px] text-[13px] font-bold leading-none">+</span>
      <span className="ml-[13px] mr-[18px] text-[11px]">100%</span>
    </div>
  </div>
);

export default function App() {
  return (
    <div className="relative flex h-[648px] w-[1200px] flex-col overflow-hidden border-r border-[#dcdcdc] bg-white font-['Roboto',sans-serif]">
      <TitleBar />
      <TabBar />
      <Ribbon />
      <div className="flex min-h-0 flex-1">
        <Sidebar />
        <MessageList />
        <ReadingPane />
      </div>
      <NavBar />
      <StatusBar />
      <ContextMenu />
    </div>
  );
}
